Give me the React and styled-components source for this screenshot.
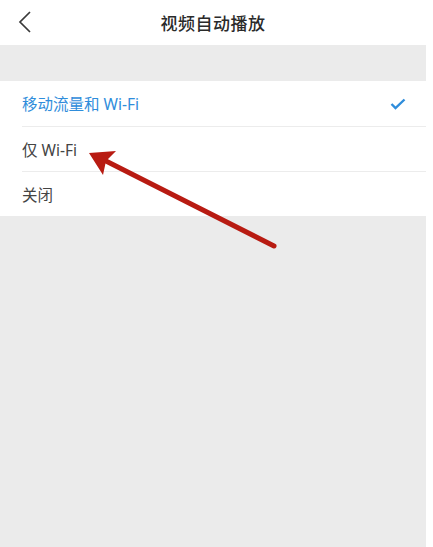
import styled, { createGlobalStyle } from 'styled-components';

const GlobalStyle = createGlobalStyle`
    html, body {
        margin: 0;
        padding: 0;
        background: #ffffff;
    }
    body {
        font-family: "Noto Sans", "Noto Sans CJK SC", sans-serif;
    }
`;

const Page = styled.div`
    position: relative;
    width: 426px;
    height: 547px;
    display: flex;
    flex-direction: column;
    background: #ebebeb;
    overflow: hidden;
`;

const Header = styled.div`
    height: 45px;
    flex-shrink: 0;
    display: flex;
    align-items: center;
    justify-content: center;
    position: relative;
    background: #ffffff;
`;

const BackButton = styled.div`
    position: absolute;
    left: 16px;
    top: 11px;
    width: 18px;
    height: 22px;
    display: flex;
`;

const Title = styled.h1`
    margin: 0;
    font-size: 17px;
    font-weight: 500;
    color: #2a2a2a;
    letter-spacing: 0.5px;
`;

const Spacer = styled.div`
    height: 36px;
    flex-shrink: 0;
`;

const List = styled.div`
    background: #ffffff;
    padding-left: 22px;
    display: flex;
    flex-direction: column;
`;

const Row = styled.div`
    height: 45px;
    display: flex;
    align-items: center;
    justify-content: space-between;
    padding-right: 20px;
    border-top: ${(p) => (p.first ? 'none' : '1px solid #ececec')};
    box-sizing: border-box;
    font-size: 15.5px;
    font-weight: 400;
    color: ${(p) => (p.active ? '#2f8ddb' : '#444444')};
`;

const Arrow = styled.svg`
    position: absolute;
    left: 0;
    top: 0;
    pointer-events: none;
`;

const options = [
    { label: '移动流量和 Wi-Fi', active: true },
    { label: '仅 Wi-Fi', active: false },
    { label: '关闭', active: false },
];

const App = () => {
    return (
        <>
            <GlobalStyle />
            <Page>
                <Header>
                    <BackButton>
                        <svg width="18" height="22" viewBox="0 0 18 22">
                            <path d="M14 1 L4 11 L14 21" fill="none" stroke="#3a3a3a" strokeWidth="1.7" />
                        </svg>
                    </BackButton>
                    <Title>视频自动播放</Title>
                </Header>
                <Spacer />
                <List>
                    {options.map((o, i) => (
                        <Row key={o.label} first={i === 0} active={o.active}>
                            <span>{o.label}</span>
                            {o.active && (
                                <svg width="16" height="12" viewBox="0 0 16 12">
                                    <path d="M1.5 6 L5.5 10 L14.5 1.5" fill="none" stroke="#2f8ddb" strokeWidth="2.4" />
                                </svg>
                            )}
                        </Row>
                    ))}
                </List>
                <Arrow width="426" height="547" viewBox="0 0 426 547">
                    <line x1="274" y1="246" x2="100" y2="158" stroke="#b81b12" strokeWidth="5" strokeLinecap="round" />
                    <path d="M89 153 L116 151 L106 161 L103 175 Z" fill="#b81b12" />
                </Arrow>
            </Page>
        </>
    );
};

export default App;
